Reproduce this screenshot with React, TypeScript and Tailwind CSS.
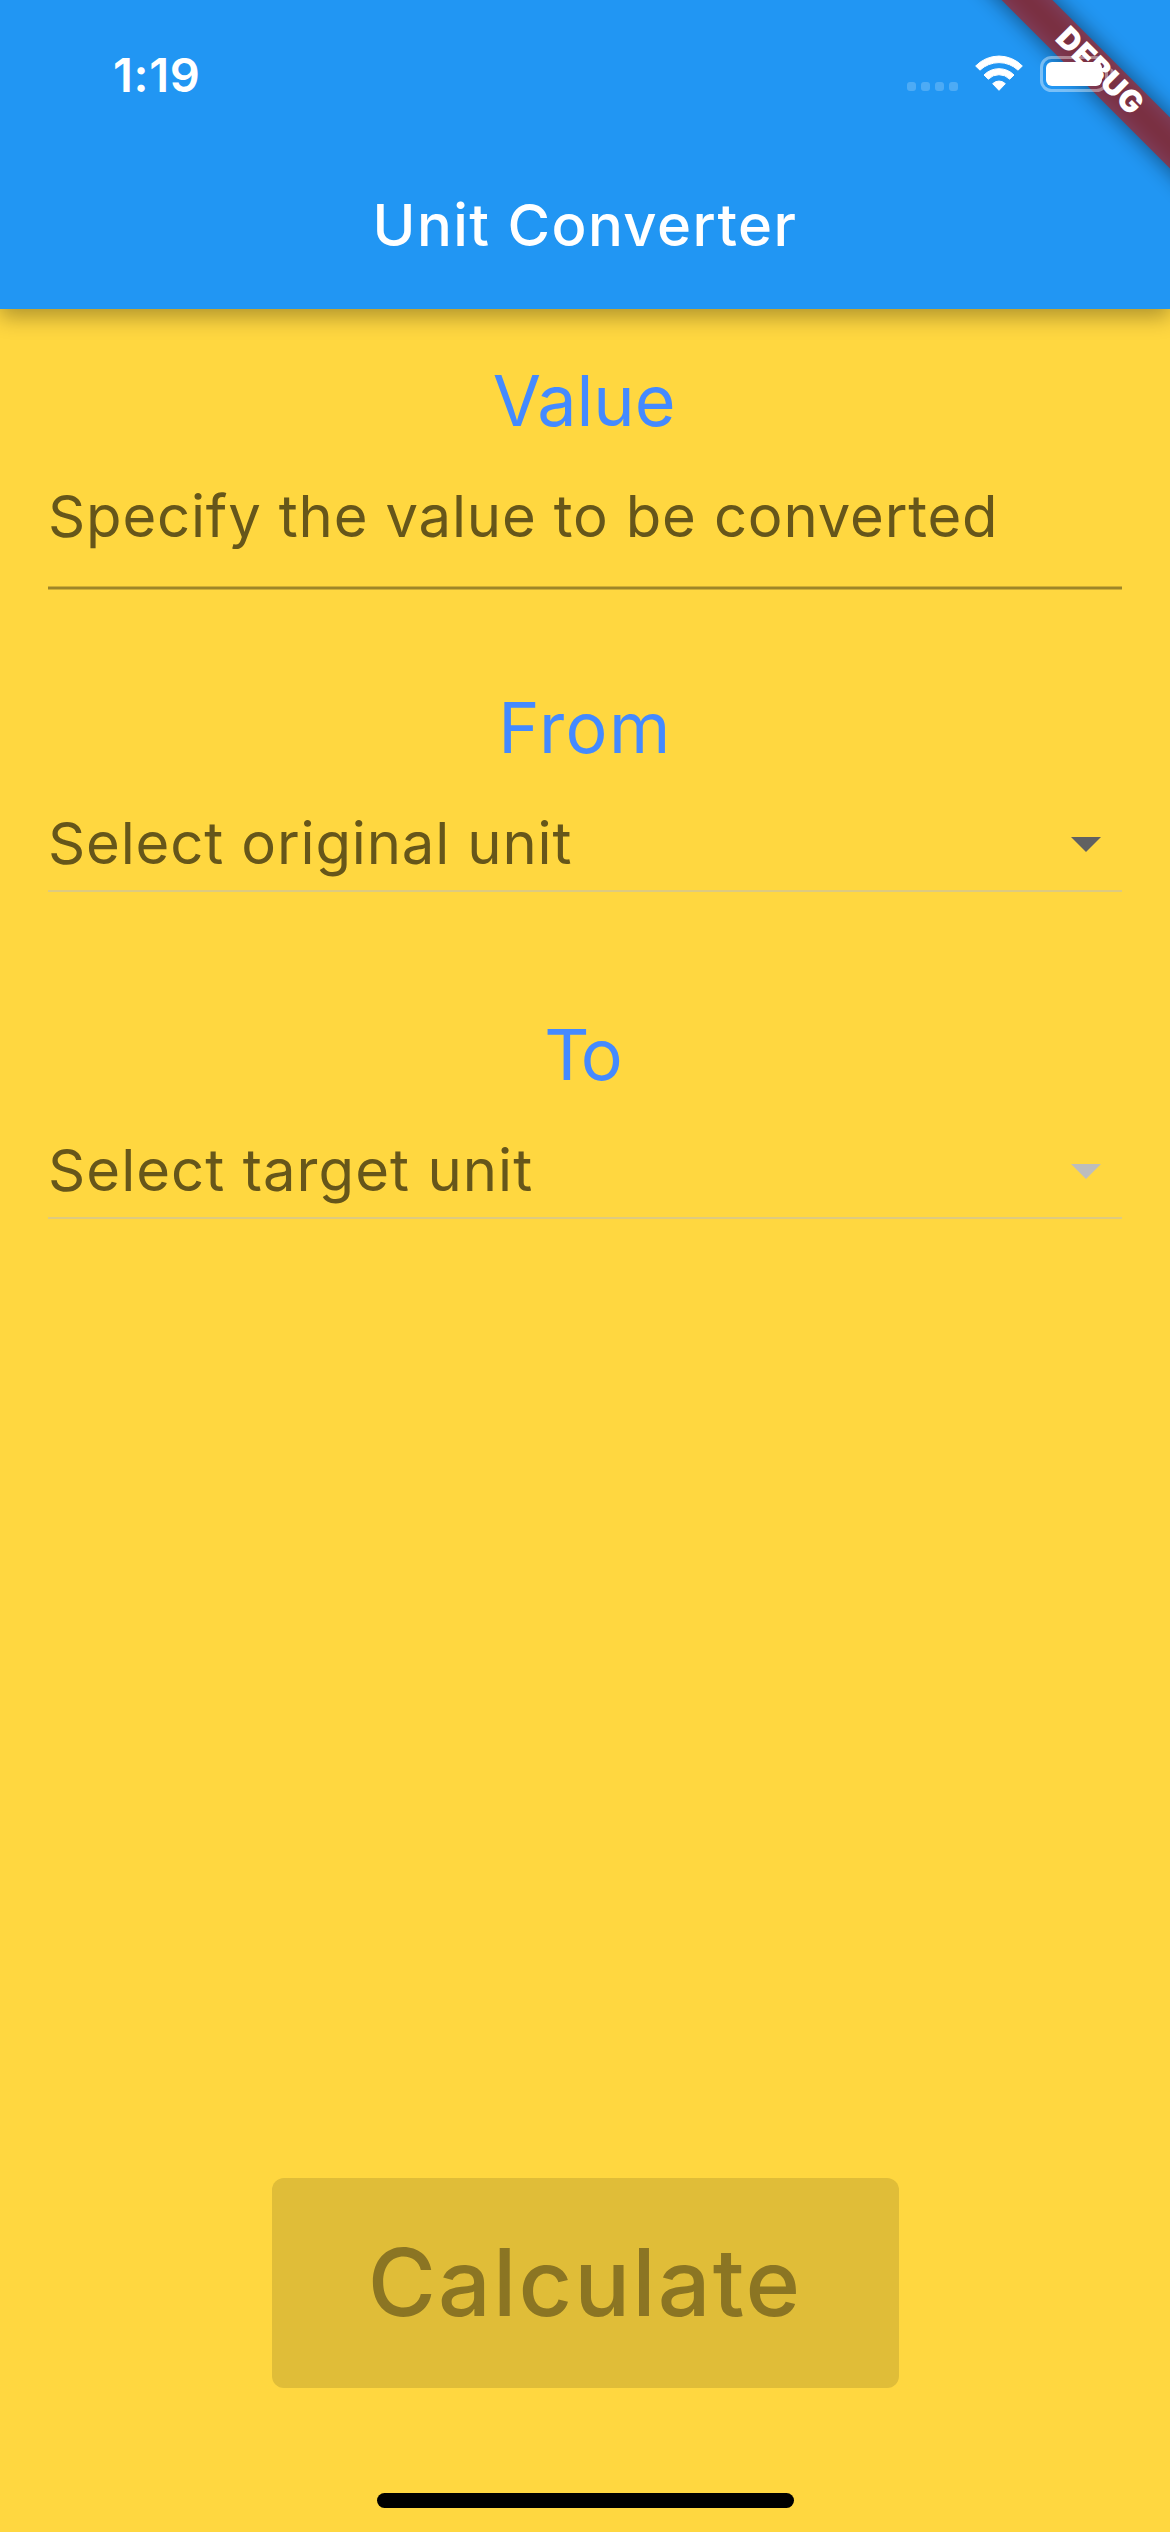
import type { ReactNode } from "react";

function SignalDots() {
  return (
    <svg width="51" height="38" viewBox="0 0 51 38" fill="#fff" fillOpacity="0.2">
      {[0, 14, 28, 42].map((x) => (
        <rect key={x} x={x} y="27" width="9" height="9" rx="3" />
      ))}
    </svg>
  );
}

function WifiIcon() {
  return (
    <svg width="48" height="38" viewBox="285 165 144 114" fill="#fff" stroke="#fff" strokeWidth="3" strokeLinejoin="round">
      <path d="M287 198A97 97 0 0 1 427 198L414 210.500A83 83 0 0 0 300 210.500Z" />
      <path d="M312 225A63 63 0 0 1 402 225L389 237.500A45 45 0 0 0 325 237.500Z" />
      <path d="M338 251A27 27 0 0 1 376 251L357 271Z" />
    </svg>
  );
}

function BatteryIcon() {
  return (
    <svg width="75" height="38" viewBox="0 0 75 38" fill="none">
      <rect x="1.500" y="2.500" width="65" height="33" rx="10" stroke="#fff" strokeOpacity="0.4" strokeWidth="3" />
      <rect x="6" y="7" width="56" height="24" rx="6" fill="#fff" />
      <path d="M70.500 13C73.500 14.500 74.500 16.500 74.500 19S73.500 23.500 70.500 25Z" fill="#fff" fillOpacity="0.4" />
    </svg>
  );
}

function DebugRibbon() {
  return (
    <>
      <div className="absolute left-[898.5px] top-[54px] z-10 h-9 w-[400px] rotate-45 bg-black/50 blur-[11px]" />
      <div className="absolute left-[898.5px] top-[54px] z-10 flex h-9 w-[400px] rotate-45 items-center justify-center bg-[#b71c1c]/63 pb-[3px] text-[30.6px] leading-none font-black tracking-[0.5px] text-white">
        DEBUG
      </div>
    </>
  );
}

function Section({ title, tracking, children }: { title: string; tracking: string; children: ReactNode }) {
  return (
    <section className="h-[327px]">
      <h2 className={`flex h-[87px] items-center justify-center text-[70px] leading-none text-[#448aff] ${tracking}`}>
        {title}
      </h2>
      {children}
    </section>
  );
}

function Dropdown({ hint, tracking, arrow }: { hint: string; tracking: string; arrow: string }) {
  return (
    <div className="flex h-[121px] items-center justify-between border-b-2 border-[#deca7f] pt-[25px]">
      <span className={`text-[58px] leading-none whitespace-nowrap text-[#66561a] ${tracking}`}>{hint}</span>
      <svg className="mt-[3px] mr-[21px]" width="30" height="15" viewBox="0 0 30 15">
        <path d="M0 0H30L15 15Z" fill={arrow} />
      </svg>
    </div>
  );
}

export default function App() {
  return (
    <div className="relative flex h-[2532px] w-[1170px] flex-col overflow-hidden bg-[#ffd740] font-[Inter,sans-serif]">
      <header className="h-[309px] shrink-0 bg-[#2196f3] shadow-[0_8px_20px_rgba(0,0,0,0.31)]">
        <div className="relative z-20 flex h-[141px] items-center justify-between pt-[7px] pr-[55px] pl-[113px] text-white">
          <span className="text-[47px] leading-none font-semibold tracking-[0.7px]">1:19</span>
          <div className="flex items-center gap-[17px]">
            <SignalDots />
            <WifiIcon />
            <BatteryIcon />
          </div>
        </div>
        <h1 className="flex h-[168px] items-center justify-center text-[58px] leading-none font-medium tracking-[1.45px] text-white">
          Unit Converter
        </h1>
      </header>
      <DebugRibbon />

      <main className="flex grow flex-col px-12 pt-12">
        <Section title="Value" tracking="tracking-[-0.1px] pr-[2px]">
          <div className="flex h-[142px] items-center pt-[2px]">
            <span className="text-[58px] leading-none whitespace-nowrap tracking-[0.83px] text-[#66561a]">
              Specify the value to be converted
            </span>
          </div>
          <div className="h-1 border-y border-[#cfae34] bg-[#9e8528]" />
        </Section>
        <Section title="From" tracking="tracking-[1.4px]">
          <Dropdown hint="Select original unit" tracking="tracking-[0.85px]" arrow="#616161" />
        </Section>
        <Section title="To" tracking="tracking-[-3px] pr-[6px]">
          <Dropdown hint="Select target unit" tracking="tracking-[1.05px]" arrow="#bdbdbd" />
        </Section>
        <button className="mt-auto mb-[105px] flex h-[210px] w-[627px] items-center justify-center self-center rounded-xl bg-[#e0bd38] pb-[2px] text-[93px] leading-none font-medium tracking-[2.1px] text-[#8b7523]">
          Calculate
        </button>
      </main>
      <footer className="flex h-[39px] shrink-0 justify-center">
        <div className="h-[15px] w-[417px] rounded-full bg-black" />
      </footer>
    </div>
  );
}
